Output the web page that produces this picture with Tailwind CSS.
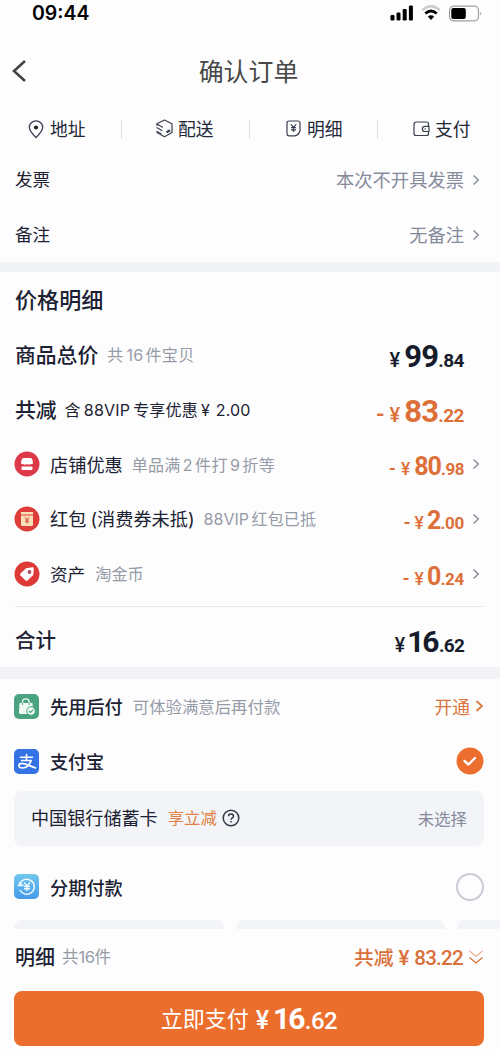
<!DOCTYPE html>
<html lang="zh-CN">
<head>
<meta charset="utf-8">
<title>确认订单</title>
<script src="https://cdn.jsdelivr.net/npm/@tailwindcss/browser@4"></script>
</head>
<body class="w-[500px] h-[1050px] overflow-hidden bg-[#fdfdfe] text-[#1c2233] font-['Inter','Noto_Sans_CJK_SC',sans-serif] leading-none whitespace-nowrap">
<header class="h-[108px]">
  <div class="h-[27px] flex items-center justify-between pl-[32px] pr-[18px]">
    <div class="text-[19.500px] font-semibold text-black">09:44</div>
    <div class="flex items-center gap-[7px] -mt-[1px]">
      <svg width="24" height="16" viewBox="0 0 24 16"><rect x="0.5" y="10" width="4" height="5.500" rx="1.200"/><rect x="6.500" y="7.500" width="4" height="8" rx="1.200"/><rect x="12.700" y="4" width="4" height="11.500" rx="1.200"/><rect x="18.900" y="0.500" width="4" height="15" rx="1.200"/></svg>
      <svg width="20" height="16" viewBox="0 0 20 16" fill="none"><path d="M1.200 5.200Q10-2.600 18.800 5.200" stroke="#ccc" stroke-width="2.400"/><path d="M4.300 8.500Q10 3.600 15.700 8.500" stroke="#000" stroke-width="2.800"/><path d="M6.800 11.600Q10 8.700 13.200 11.600L10 15Z" fill="#000"/></svg>
      <svg width="34" height="17" viewBox="0 0 34 17" fill="none"><rect x="1.500" y="1.200" width="29" height="14.600" rx="4" stroke="#a0a0a0" stroke-width="1.200"/><rect x="3.300" y="3" width="14.500" height="11" rx="2" fill="#000"/><path d="M32.300 6.500Q34 8.500 32.300 10.500Z" fill="#888"/></svg>
    </div>
  </div>
  <div class="h-[88px] grid grid-cols-[60px_1fr_60px] items-center">
    <svg class="ml-[11px]" width="16" height="24" viewBox="0 0 16 24" fill="none" stroke="#444" stroke-width="2.600"><path d="M14 2L3 12L14 22"/></svg>
    <h1 class="text-center text-[24.900px] text-[#484848] mr-[3px] mt-[2px]">确认订单</h1>
  </div>
</header>
<nav class="h-[44px] flex items-center text-[17.800px] text-[#232838] pl-[28px]">
  <div class="w-[128px] flex items-center"><svg class="mr-[6px] -mt-[2px]" width="16" height="19" viewBox="0 0 16 19" fill="none" stroke="#3a4050" stroke-width="1.300"><path d="M8 17.500C5 14.300 1.300 11 1.300 7.500A6.700 6.600 0 0 1 14.700 7.500C14.700 11 11 14.300 8 17.500Z"/><circle cx="8" cy="7.500" r="2.100" fill="#222" stroke="none"/></svg><span class="-mt-[1px]">地址</span><i class="ml-auto mr-[34px] -mt-[2px] w-px h-[19px] bg-[#dcdde1]"></i></div>
  <div class="w-[130px] flex items-center"><svg class="mr-[5px] -mt-[3px]" width="17" height="19" viewBox="0 0 17 19" fill="none" stroke="#3a4050" stroke-width="1.200" stroke-linejoin="round" stroke-linecap="round"><path d="M1 6.500V4.800L8.500 1L16 4.800V13.600L8.500 17.800L1 13.600V13"/><path d="M1 5L6.500 8.200M1 8.700L5.800 11.400M1 12.500L5 14.700"/><path d="M11.400 12.800L13.200 11.800" stroke-width="2.400"/></svg><span class="-mt-[1px]">配送</span><i class="ml-auto mr-[36px] -mt-[2px] w-px h-[19px] bg-[#dcdde1]"></i></div>
  <div class="w-[127px] flex items-center"><svg class="mr-[6px] -mt-[3px]" width="15" height="17" viewBox="0 0 15 17" fill="none" stroke="#3a4050" stroke-width="1.200"><path d="M1 3Q1 1 3 1H12Q14 1 14 3V10.500Q13 15 9 15.800H3Q1 15.800 1 13.800Z"/><path d="M4.800 4.300L7.500 7.100L10.200 4.300M7.500 7.100V12M5 7.700H10M5 9.800H10"/></svg><span class="-mt-[1px]">明细</span><i class="ml-auto mr-[35px] -mt-[2px] w-px h-[19px] bg-[#dcdde1]"></i></div>
  <div class="flex items-center"><svg class="mr-[5px] -mt-[2px]" width="17" height="16" viewBox="0 0 17 16" fill="none" stroke="#3a4050" stroke-width="1.200"><path d="M15.500 5V3Q15.500 1 13.500 1H3.500Q1 1 1 3.500V12.500Q1 14.500 3 14.500H13.500Q15.500 14.500 15.500 12.500V11"/><path d="M16 5.300H12A2.600 2.600 0 0 0 12 10.500H16ZM11.500 8H13"/></svg><span class="-mt-[1px]">支付</span></div>
</nav>
<section class="h-[110px] text-[17.600px]">
  <div class="h-[55px] flex items-center pl-[15px] pr-[20px]"><span>发票</span><span class="ml-auto mt-[1px] text-[#858b9b] text-[18.300px]">本次不开具发票</span><svg class="ml-[8px]" width="8" height="12" viewBox="0 0 8 12" fill="none" stroke="#858b96" stroke-width="1.400"><path d="M1.500 1.500L6.300 6L1.500 10.500"/></svg></div>
  <div class="h-[55px] flex items-center pl-[15px] pr-[20px]"><span>备注</span><span class="ml-auto mt-[1px] text-[#858b9b] text-[18.300px]">无备注</span><svg class="ml-[8px]" width="8" height="12" viewBox="0 0 8 12" fill="none" stroke="#858b96" stroke-width="1.400"><path d="M1.500 1.500L6.300 6L1.500 10.500"/></svg></div>
</section>
<div class="h-[10px] bg-[#f1f3f6]"></div>
<section class="h-[395px] pl-[15px] pr-[16px]">
  <h2 class="h-[56px] flex items-center text-[22.100px] font-medium">价格明细</h2>
  <div class="h-[54.700px] flex items-center pr-[20px]"><b class="text-[20.800px] mt-[2px] font-medium">商品总价</b><span class="ml-[9px] text-[16px] text-[#969ba8] tracking-[0.300px]">共<span class="ml-[3px] mr-[2px]">16</span>件宝贝</span>
    <div class="ml-auto mt-[3px] flex items-baseline font-['Roboto'] font-bold text-[#171c2c]"><span class="text-[20px] font-medium mr-[4px]">¥</span><span class="text-[31px] tracking-[-0.800px]">99</span><span class="text-[19px] tracking-[-0.500px]">.84</span></div></div>
  <div class="h-[54.700px] flex items-center pr-[20px]"><b class="text-[20.800px] mt-[2px] font-medium">共减</b><span class="ml-[8px] text-[16px] tracking-[0.200px]">含<span class="mx-[3px]">88VIP</span>专享优惠<span class="ml-[3px] mr-[1px]">¥</span> 2.00</span>
    <div class="ml-auto mt-[3px] flex items-baseline font-['Roboto'] font-bold text-[#dd6f38]"><span class="text-[22px] mr-[5px]">-</span><span class="text-[20px] font-medium mr-[4px]">¥</span><span class="text-[31px] tracking-[-0.800px]">83</span><span class="text-[19px] tracking-[-0.500px]">.22</span></div></div>
  <div class="h-[54.700px] flex items-center pr-[4px]"><svg class="mr-[10px] -ml-[1px] -mt-[2px]" width="26" height="26" viewBox="0 0 26 26"><circle cx="13" cy="13" r="12.500" fill="#de3949"/><path d="M9.500 7H16.500Q18 7 18.500 9L19 12Q18.500 14 16.500 13Q14.800 14.500 13 13Q11 14.500 9.500 13Q7.500 14 7 12L7.500 9Q8 7 9.500 7Z" fill="#fff"/><rect x="7.500" y="15.500" width="11" height="3.500" rx="1" fill="#fff"/></svg><span class="text-[18.200px]">店铺优惠</span><span class="ml-[9px] text-[16px] text-[#969ba8] tracking-[0.300px]">单品满<span class="mx-[2.200px]">2</span>件打<span class="mx-[2.200px]">9</span>折等</span>
    <div class="ml-auto mt-[3px] flex items-baseline font-['Roboto'] font-bold text-[#dd6f38]"><span class="text-[18px] mr-[5px]">-</span><span class="text-[17.500px] font-medium mr-[4px]">¥</span><span class="text-[25px] tracking-[-0.900px]">80</span><span class="text-[17px] tracking-[-0.500px]">.98</span></div><svg class="ml-[8px] -mt-[1px]" width="8" height="12" viewBox="0 0 8 12" fill="none" stroke="#858b96" stroke-width="1.400"><path d="M1.500 1.500L6.300 6L1.500 10.500"/></svg></div>
  <div class="h-[54.700px] flex items-center pr-[4px]"><svg class="mr-[10px] -ml-[1px]" width="26" height="26" viewBox="0 0 26 26"><circle cx="13" cy="13" r="12.500" fill="#dd3c38"/><path d="M7 6H19V8.500H7ZM7 9.500H19V18.500Q19 20 17.500 20H8.500Q7 20 7 18.500Z" fill="#fae0b6"/><path d="M10.800 11L13 13.500L15.200 11M13 13.500V17.500M11 14H15M11 15.800H15" stroke="#d65047" fill="none"/></svg><span class="text-[18.200px]">红包<span class="ml-[4px]">(</span>消费券未抵)</span><span class="ml-[9px] text-[16px] text-[#969ba8]"><span class="mr-[2.500px]">88VIP</span><span class="tracking-[0.200px]">红包已抵</span></span>
    <div class="ml-auto mt-[3px] flex items-baseline font-['Roboto'] font-bold text-[#dd6f38]"><span class="text-[18px] mr-[4px]">-</span><span class="text-[17.500px] font-medium mr-[3px]">¥</span><span class="text-[25px] tracking-[-0.800px]">2</span><span class="text-[17px] tracking-[-0.300px]">.00</span></div><svg class="ml-[8px] -mt-[1px]" width="8" height="12" viewBox="0 0 8 12" fill="none" stroke="#858b96" stroke-width="1.400"><path d="M1.500 1.500L6.300 6L1.500 10.500"/></svg></div>
  <div class="h-[54.700px] flex items-center pr-[4px]"><svg class="mr-[10px] -ml-[1px]" width="26" height="26" viewBox="0 0 26 26"><circle cx="13" cy="13" r="12.500" fill="#dd3935"/><path d="M12 7.300L18.500 6.300Q19.800 6.300 19.800 7.500L19.300 14L13.500 19.500Q12.500 20.300 11.500 19.400L6.500 14.500Q5.600 13.500 6.500 12.500Z" fill="#fff"/><circle cx="15.500" cy="11" r="1.900" fill="#b54b62"/></svg><span class="text-[17.600px] mt-[1px]">资产</span><span class="ml-[10px] text-[16.200px] text-[#969ba8]">淘金币</span>
    <div class="ml-auto mt-[4px] flex items-baseline font-['Roboto'] font-bold text-[#dd6f38]"><span class="text-[18px] mr-[5px]">-</span><span class="text-[17.500px] font-medium mr-[3px]">¥</span><span class="text-[25px] tracking-[-0.800px]">0</span><span class="text-[17px] tracking-[-0.300px]">.24</span></div><svg class="ml-[8px] -mt-[1px]" width="8" height="12" viewBox="0 0 8 12" fill="none" stroke="#858b96" stroke-width="1.400"><path d="M1.500 1.500L6.300 6L1.500 10.500"/></svg></div>
  <div class="mt-[4.500px] border-t border-[#e8e9ec] h-[66px] flex items-center pr-[20px]"><b class="text-[20.500px] mt-[3px] font-medium">合计</b>
    <div class="ml-auto mt-[5px] flex items-baseline font-['Roboto'] font-bold text-[#171c2c]"><span class="text-[19.500px] font-medium mr-[2px]">¥</span><span class="text-[30px] tracking-[-0.500px]"><span class="tracking-[-2px]">1</span>6</span><span class="text-[19px] tracking-[-0.800px]">.62</span></div></div>
</section>
<div class="h-[12px] bg-[#f1f3f6]"></div>
<section class="h-[250px] pl-[14px] pr-[16px] overflow-hidden">
  <div class="h-[55px] flex items-center"><svg class="mr-[11px]" width="25" height="25" viewBox="0 0 25 25"><rect width="25" height="25" rx="5" fill="#49a47f"/><path d="M5.500 9H18.500L19 18.500Q19 20 17.500 20H6.500Q5 20 5 18.500Z" fill="#f0fbf5"/><path d="M8.500 9.500V8Q8.500 4.800 11.800 4.800T15.200 8V9.500" fill="none" stroke="#f0fbf5" stroke-width="1.300"/><path d="M8.500 9V11M15.200 9V11" stroke="#49a47f"/><circle cx="17" cy="17" r="4.300" fill="#f0fbf5" stroke="#49a47f"/><path d="M15 17L16.500 18.500L19.200 15.700" fill="none" stroke="#49a47f" stroke-width="1.200"/></svg><span class="mt-[2px] text-[18.200px] font-medium">先用后付</span><span class="ml-[10px] mt-[1px] text-[16.400px] text-[#969ba8]">可体验满意后再付款</span><span class="ml-auto mt-[2px] text-[17.700px] text-[#d9743c]">开通</span><svg class="ml-[5px] -mt-[1px]" width="9" height="14" viewBox="0 0 9 14" fill="none" stroke="#d9743c" stroke-width="1.700"><path d="M1.500 2L7 7L1.500 12"/></svg></div>
  <div class="h-[55px] flex items-center"><svg class="mr-[11px]" width="25" height="25" viewBox="0 0 25 25" fill="none" stroke="#fff" stroke-linecap="round"><rect width="25" height="25" rx="5" fill="#3472e6" stroke="none"/><path d="M6.500 8.300H18.500M12.500 5.500V11.300M7.500 11.500H17" stroke-width="1.600"/><path d="M17 11.500Q15 18.500 8.500 19C3.500 19.200 4 14.300 8 14.300C12 14.300 16 17.500 21.500 18.800" stroke-width="1.700"/></svg><span class="mt-[2px] text-[18px] font-medium">支付宝</span><svg class="ml-auto -mt-[1px]" width="28" height="28" viewBox="0 0 28 28"><circle cx="14" cy="14" r="13.500" fill="#ec6e2e"/><path d="M8.500 14L12.500 17.500L19 11" fill="none" stroke="#fff" stroke-width="2.400" stroke-linecap="round" stroke-linejoin="round"/></svg></div>
  <div class="mt-[2px] h-[55px] flex items-center rounded-[8px] bg-[#f2f4f7] px-[17px]"><span class="text-[18.100px]">中国银行储蓄卡</span><span class="ml-[10px] text-[16.400px] text-[#e08145]">享立减</span><svg class="ml-[5px] -mt-[1px]" width="18" height="18" viewBox="0 0 18 18" fill="none" stroke="#333847" stroke-width="1.500"><circle cx="9" cy="9" r="7.800"/><path d="M6.500 7.300Q6.500 4.900 9 4.900T11.500 7.200C11.500 8.800 9 8.800 9 10.700M9 12V13.600"/></svg><span class="ml-auto mt-[1px] text-[16.400px] text-[#858b9b]">未选择</span></div>
  <div class="mt-[13px] h-[55px] flex items-center"><svg class="mr-[11px]" width="25" height="25" viewBox="0 0 25 25" fill="none" stroke="#effbff"><defs><linearGradient id="g" x2="0" y2="1"><stop stop-color="#73c8ee"/><stop offset="1" stop-color="#4599e8"/></linearGradient></defs><rect width="25" height="25" rx="5" fill="url(#g)" stroke="none"/><path d="M6 9.500A7.500 7.500 0 1 1 6 16M4.500 11.500H8.500L6 8.500Z" stroke-width="1.400"/><path d="M10 8.500L13 12L16 8.500M13 12V17M10 12.500H16M10 14.700H16" stroke-width="1.400"/></svg><span class="mt-[3px] text-[18.200px] font-medium">分期付款</span><i class="ml-auto w-[28px] h-[28px] rounded-full border-2 border-[#c9ccd4]"></i></div>
  <div class="mt-[6px] h-[40px] flex gap-[12px] -mr-[16px]"><i class="w-[210px] shrink-0 h-full rounded-[8px] bg-[#f2f4f7]"></i><i class="w-[209px] shrink-0 h-full rounded-[8px] bg-[#f2f4f7]"></i><i class="w-[60px] shrink-0 h-full rounded-[8px] bg-[#f2f4f7]"></i></div>
</section>
<footer class="h-[121px] pl-[14px] pr-[16px]">
  <div class="h-[56px] flex items-center"><b class="ml-[1px] mt-[2px] text-[20px] font-medium">明细</b><span class="ml-[7px] mt-[1px] text-[16.500px] text-[#969ba8]">共<span class="tracking-[-0.500px]">16</span>件</span><span class="ml-auto mt-[3px] text-[19.800px] font-medium text-[#d9703a]">共减</span><span class="ml-[5px] mt-[2px] font-['Roboto'] font-medium text-[20.500px] tracking-[-0.700px] text-[#d9703a]"><span class="mr-[1px]">¥</span> 83.22</span><svg class="ml-[5px]" width="16" height="17" viewBox="0 0 16 17" fill="none" stroke="#d9703a" stroke-width="1.300"><path d="M1.500 2L8 7.500L14.500 2" opacity=".55"/><path d="M1.500 8.500L8 14L14.500 8.500"/></svg></div>
  <button class="mt-[6px] w-full h-[55px] flex items-center justify-center rounded-[8px] bg-[#eb6e2d] text-white"><span class="text-[22px]">立即支付</span><span class="ml-[7px] flex items-baseline font-['Roboto'] font-medium"><span class="text-[25px] mr-[4px]">¥</span><span class="text-[30px] font-bold tracking-[-0.800px]"><span class="tracking-[-2px]">1</span>6</span><span class="text-[24px] tracking-[-0.500px]">.62</span></span></button>
</footer>
</body>
</html>
